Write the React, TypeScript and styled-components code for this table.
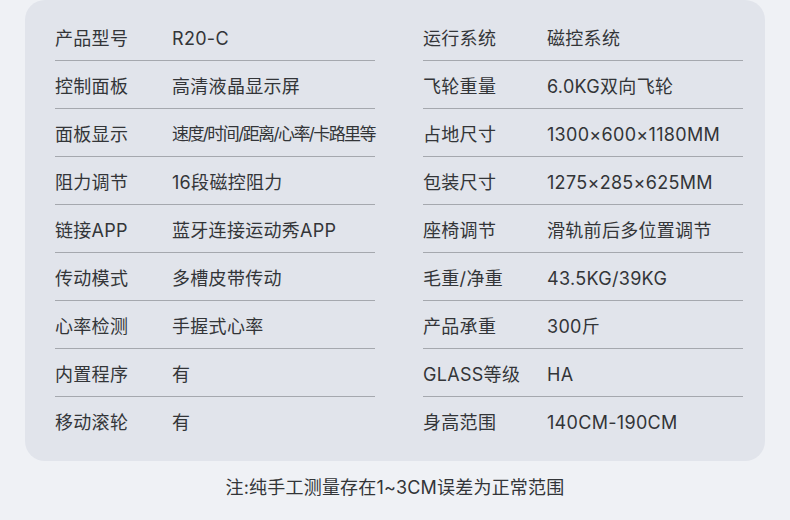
import React from "react";
import styled, { createGlobalStyle } from "styled-components";

const Global = createGlobalStyle`
  html, body { margin: 0; padding: 0; }
  body {
    background: #eff1f5;
    font-family: Inter, "Noto Sans CJK SC", sans-serif;
    color: #333538;
  }
`;

const Page = styled.div`
  width: 790px;
  height: 520px;
  box-sizing: border-box;
  padding: 0 25px;
  display: flex;
  flex-direction: column;
  overflow: hidden;
`;

const Card = styled.div`
  background: #e1e4eb;
  border-radius: 20px;
  padding: 13px 22px 16px 30px;
  display: grid;
  grid-template-columns: 320px 320px;
  column-gap: 48px;
`;

const Column = styled.div`
  display: flex;
  flex-direction: column;
`;

const Row = styled.div<{ $last?: boolean }>`
  height: 43px;
  padding-top: 4px;
  display: flex;
  align-items: center;
  border-bottom: 1px solid ${(p) => (p.$last ? "transparent" : "#a5a8ae")};
  font-size: 18px;
  line-height: 1;
  letter-spacing: 0.3px;
`;

const Label = styled.div<{ $w: number }>`
  width: ${(p) => p.$w}px;
  flex: none;
  white-space: nowrap;
`;

const Value = styled.div<{ $tight?: boolean }>`
  white-space: nowrap;
  font-size: ${(p) => (p.$tight ? "17px" : "18px")};
  letter-spacing: ${(p) => (p.$tight ? "-1.6px" : "0.3px")};
`;

const Note = styled.div`
  text-align: center;
  font-size: 18px;
  letter-spacing: 0.2px;
  margin-top: 12px;
  color: #333538;
`;

type Item = [string, string, boolean?];

const left: Item[] = [
  ["产品型号", "R20-C"],
  ["控制面板", "高清液晶显示屏"],
  ["面板显示", "速度/时间/距离/心率/卡路里等", true],
  ["阻力调节", "16段磁控阻力"],
  ["链接APP", "蓝牙连接运动秀APP"],
  ["传动模式", "多槽皮带传动"],
  ["心率检测", "手握式心率"],
  ["内置程序", "有"],
  ["移动滚轮", "有"],
];

const right: Item[] = [
  ["运行系统", "磁控系统"],
  ["飞轮重量", "6.0KG双向飞轮"],
  ["占地尺寸", "1300×600×1180MM"],
  ["包装尺寸", "1275×285×625MM"],
  ["座椅调节", "滑轨前后多位置调节"],
  ["毛重/净重", "43.5KG/39KG"],
  ["产品承重", "300斤"],
  ["GLASS等级", "HA"],
  ["身高范围", "140CM-190CM"],
];

const Col = ({ items, w }: { items: Item[]; w: number }) => (
  <Column>
    {items.map(([l, v, t], i) => (
      <Row key={l} $last={i === items.length - 1}>
        <Label $w={w}>{l}</Label>
        <Value $tight={t}>{v}</Value>
      </Row>
    ))}
  </Column>
);

export default function App() {
  return (
    <>
      <Global />
      <Page>
        <Card>
          <Col items={left} w={117} />
          <Col items={right} w={124} />
        </Card>
        <Note>注:纯手工测量存在1~3CM误差为正常范围</Note>
      </Page>
    </>
  );
}
